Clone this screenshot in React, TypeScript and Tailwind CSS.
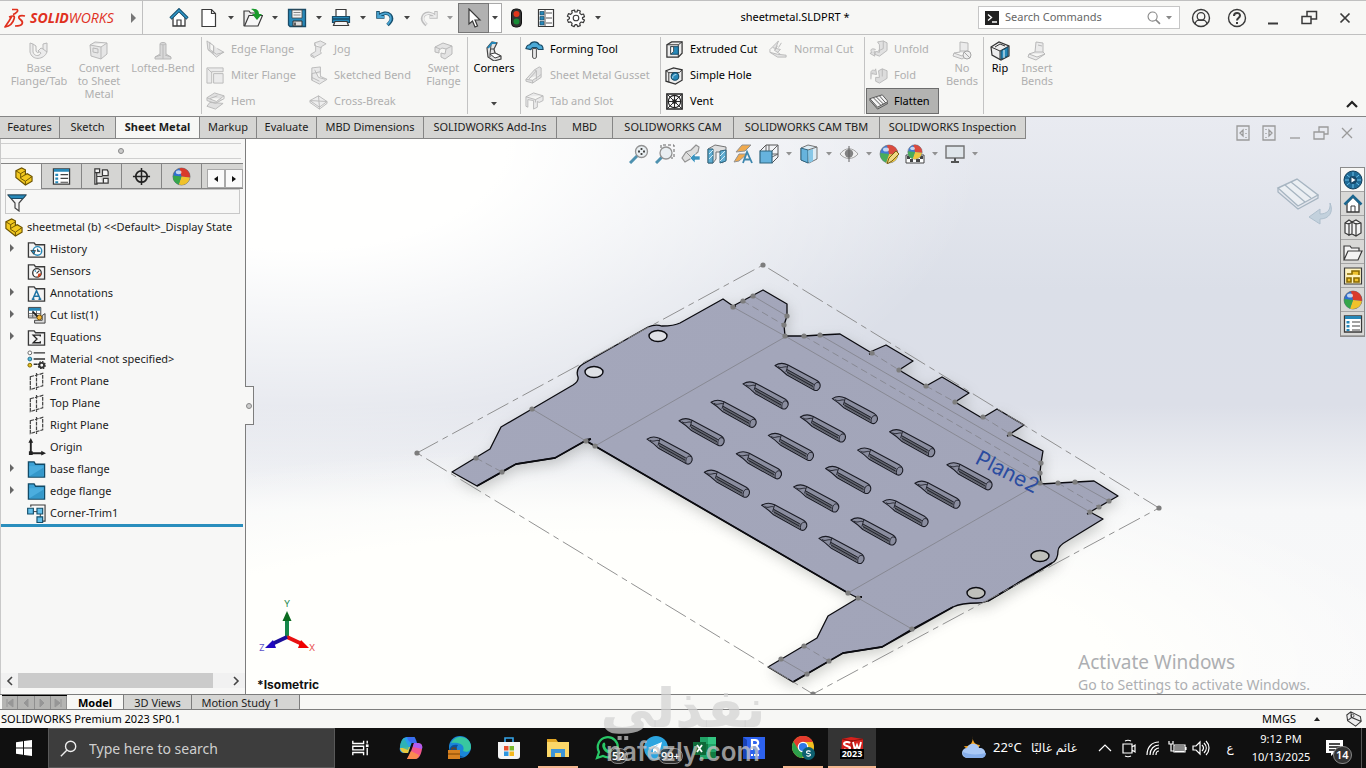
import type { ReactNode } from "react";

type P = { children?: ReactNode };

const G = "#b9b9b9";
const B = "#2788b8";
const K = "#3a3a3a";

function Ico({ children, box = 20, cls = "h-5 w-5" }: P & { box?: number; cls?: string }) {
  return (
    <svg viewBox={`0 0 ${box} ${box}`} className={`${cls} shrink-0`} fill="none" aria-hidden="true">
      {children}
    </svg>
  );
}

function Drop({ label, cls = "w-5", color = "#444" }: { label: string; cls?: string; color?: string }) {
  return (
    <button aria-label={label} className={`${cls} flex h-6 shrink-0 items-center justify-center`}>
      <svg viewBox="0 0 6 4" className="h-1 w-1.5" aria-hidden="true">
        <path d="M0 0h6L3 3.6z" fill={color} />
      </svg>
    </button>
  );
}

/* ---------- title bar icons ---------- */
const home = (
  <Ico>
    <path d="M4 9v9h12V9l-6-6z" fill="#fff" stroke={K} strokeWidth="1.3" />
    <path d="M1.5 10.5 10 2l8.500 8.500" stroke="#164f6e" strokeWidth="3.200" />
    <path d="M2 10 10 2.200l8 7.800" stroke="#2e97c9" strokeWidth="1.500" />
    <path d="M8 18v-6h4v6" stroke={K} strokeWidth="1.200" />
  </Ico>
);
const newDoc = (
  <Ico>
    <path d="M3 1.500h9.500l4 4v13H3z" fill="#fff" stroke={K} strokeWidth="1.200" />
    <path d="M12.500 1.500v4h4" stroke={K} strokeWidth="1.200" />
  </Ico>
);
const openDoc = (
  <Ico>
    <path d="M1 18V3h5l1.500 2H13v4" fill="#ececec" stroke={K} strokeWidth="1.200" />
    <path d="M1.500 18 6 7.500h13.500L15 18z" fill="#f7f7f7" stroke={K} strokeWidth="1.200" />
    <path d="M8 1c6-1 8 2 8 5h3l-5 6-5-6h3c0-2-1-3-4-5z" fill="#1a9a2c" />
  </Ico>
);
const save = (
  <Ico>
    <path d="M1.500 1.500h17v17H3l-1.500-1.500z" fill={B} stroke="#1a4c68" strokeWidth="1.300" />
    <path d="M5 2h10v8H5z" fill="#f3f3f3" stroke="#444" strokeWidth=".8" />
    <path d="M6.500 4.500h7M6.500 7h7" stroke="#888" />
    <path d="M6 13h9v5H6z" fill="#dcdcdc" stroke="#333" />
    <path d="M8 14.500v3" stroke="#333" strokeWidth="1.500" />
  </Ico>
);
const print = (
  <Ico>
    <path d="M5 9V1.500h10V9" fill="#fff" stroke={K} strokeWidth="1.200" />
    <path d="M1.500 8.500h17v6h-17z" fill={B} stroke="#1a4c68" strokeWidth="1.200" />
    <path d="M2 11h16" stroke="#164a66" strokeWidth="1.500" />
    <path d="M4 13.500h12l1.500 4h-15z" fill="#f4f4f4" stroke={K} strokeWidth="1.200" />
  </Ico>
);
const undo = (
  <Ico>
    <path d="M3 3v6h6.500M3.500 8.500C7 5 12 4 15 7c3 3.500 1 7-2.500 10" stroke="#17506f" strokeWidth="3.600" />
    <path d="M3 4v5h6M3.500 8.500C7 5 12 4.500 14.800 7.200c2.500 3.300.7 6.300-2.300 9.300" stroke="#4aa6d4" strokeWidth="1.800" />
  </Ico>
);
const redo = (
  <Ico>
    <path d="M17 3v6h-6.500M16.500 8.500C13 5 8 4 5 7c-3 3.500-1 7 2.500 10" stroke="#bdbdbd" strokeWidth="3.400" />
    <path d="M17 4v5h-6M16.500 8.500C13 5 8 4.500 5.200 7.200 2.700 10.500 4.500 13.500 7.500 16.500" stroke="#eee" strokeWidth="1.400" />
  </Ico>
);
const traffic = (
  <Ico>
    <rect x="5.500" y="1" width="10" height="18" rx="4" fill="#333" stroke="#111" />
    <circle cx="10.500" cy="6" r="3" fill="#e2371c" />
    <circle cx="10.500" cy="13.500" r="3" fill="#178c35" />
  </Ico>
);
const optionsList = (
  <Ico>
    <path d="M2.500 1.500h15v17h-15z" fill="#fff" stroke={K} strokeWidth="1.200" />
    <path d="M4 3.500h4v3.500H4zM4 8.500h4V12H4zM4 13.500h4V17H4z" fill={B} stroke="#1a4c68" strokeWidth=".7" />
    <path d="M10 5h6M10 10h6M10 15h6M9 2v16" stroke="#555" strokeWidth="1" />
  </Ico>
);
const gear = (
  <Ico>
    <path
      d="m8.500 2 .5 2 2 0 .6-2 2.700 1-.6 2.100 1.600 1.500 2.200-.6 1 2.600-2 1 0 1.400 2 1-1.100 2.600-2.200-.6-1.500 1.400.6 2.200-2.600 1-1-2h-1.500l-1.100 2-2.600-1.100.6-2.100-1.500-1.500-2.200.5-1-2.500 2-1.200v-1.400l-2-1L2.500 5.700l2.200.6 1.500-1.500L5.700 2.900z"
      fill="#fff"
      stroke={K}
      strokeWidth="1.200"
      strokeLinejoin="round"
    />
    <circle cx="10" cy="10" r="2.800" stroke={K} strokeWidth="1.100" />
  </Ico>
);

/* ---------- ribbon icons ---------- */
const ribbon: Record<string, ReactNode> = {
  base: <path d="M1 2l3 1v8c1 4 6 5 8 1l-3-2 3-3 2 1V3l4-1v9c-3 8-15 9-17 0zM4 3l3 2v5c1 2 2 2 3 1M14 8l4 3" stroke={G} fill="#ececec" />,
  convert: <path d="M1 4 6 1l12 1v11l-6 5-10-3zM1 4l11 2 6-4M12 6v12M4 7l5 1v4l-5-1z" stroke={G} fill="#e6e6e6" />,
  loft: <path d="M7 3c0-2 6-2 6 0v10l5 3v2H2v-2l5-3zM7 3c1 1 5 1 6 0M10 4v14M2 16l6-2M18 16l-6-2" stroke={G} fill="#d9d9d9" />,
  edge: <path d="M1 1l7 5v8l-6-4zM4 2v8l7 5 8-2-7-4M2 10l9 8 7-5M8 6v6" stroke={G} fill="#e6e6e6" />,
  miter: <path d="M1 2h17v4H6v12H1zM2 3l4 4M8 18V8h10v10z" stroke={G} fill="#ebebeb" />,
  hem: <path d="M1 6 9 1l10 3-8 6zM1 6v3l9 3 9-5M4 11l14 1-8 6-9-3zM19 4v3M4 7l8-3" stroke={G} fill="#e0e0e0" />,
  jog: <path d="M6 3l6-2 6 3-5 3-1 5 1 2-7 4-4-3 5-3V7zM6 3v3l7 2M2 15v2l4 2" stroke={G} fill="#e6e6e6" />,
  bend: <path d="M3 2l9-1v10l7 3-8 5-8-4zM3 15V8l9-2M6 4l4 8 7 2M3 12l8 4" stroke={G} fill="#e9e9e9" />,
  cross: <path d="M1 9l9-5 9 6-8 6zM1 9v2l10 7v-2M19 10v2l-8 6M1 9l18 1M10 4l1 12" stroke={G} fill="#eee" />,
  swept: <path d="M1 6 9 2l9 3v8l-7 5-4-2v-4l4 1 1-5-4-1-3 2v3L1 11zM1 6l5 2M18 5l-6 3" stroke={G} fill="#e3e3e3" />,
  corners: (
    <>
      <path d="M3 7 8 1l5 1-3 6 1 4 6 3v3l-7 2-6-4z" fill="#e4e4e4" stroke="#444" strokeWidth="1.200" />
      <path d="M7 8l3 0M6 13l5-1 6 3-6 2zM6 13v3M7 4l-1 9" stroke="#444" fill="#fff" />
      <path d="M4 7l4-5 4 0" stroke={B} strokeWidth="2" />
    </>
  ),
  forming: (
    <>
      <path d="M1 9c1-4 4-4 4-4 2-4 8-4 10 0 2 0 4 1 4 5h-5L12 8H8L6 10z" fill="#4ba9d6" stroke="#164a66" strokeWidth="1.300" />
      <path d="M8 9h4v9c0 2-4 2-4 0z" fill="#e8e8e8" stroke="#444" />
    </>
  ),
  gusset: <path d="M1 14l9-10 5-3 2 1v10l-9 6-7-2zM10 4l2 1v9M4 14l8-9M1 14l7 1 9-6M8 15v3" stroke={G} fill="#e2e2e2" />,
  slot: <path d="M1 5l8-4 10 3v5l-4 2-2-1v6l-4 2V9L3 8v8l-2-1zM1 5l10 3 8-4M11 8v3" stroke={G} fill="#eaeaea" />,
  extruded: (
    <>
      <path d="M2 5l5-3h11v12l-4 4H2z" fill="#ededed" stroke="#333" strokeWidth="1.300" />
      <path d="M2 5h12v13M14 5l4-3" stroke="#333" />
      <path d="M6 7h8v8H6z" fill={B} stroke="#164a66" />
      <path d="M6 15l3-3V7H6z" fill="#fff" stroke="#333" strokeWidth=".8" />
    </>
  ),
  hole: (
    <>
      <path d="M1 5l8-3 9 2v11l-7 4-10-3z" fill="#ededed" stroke="#333" strokeWidth="1.300" />
      <path d="M1 5l3 2h11l3-3M4 7v10" stroke="#333" />
      <circle cx="10.500" cy="11" r="4" fill={B} stroke="#164a66" strokeWidth="1.200" />
      <path d="M8 13c0-3 2-4 4-4" stroke="#bfe2f3" />
    </>
  ),
  vent: (
    <>
      <path d="M2 2h16v16H2z" fill="#f6f6f6" stroke="#222" strokeWidth="1.600" />
      <circle cx="10" cy="10" r="6.500" stroke="#222" strokeWidth="1.200" />
      <circle cx="10" cy="10" r="2.500" fill="#222" />
      <path d="M3 3l14 14M17 3 3 17M10 3v14M3 10h14" stroke="#222" />
    </>
  ),
  normal: <path d="M1 10 10 1 6 11l3-5M1 10v3l8 2 9 1v2H9l-8-5M10 8l3-5M6 11l6 4M4 8l8 2-3 3" stroke={G} fill="#e4e4e4" />,
  unfold: <path d="M9 2l6-1 4 2v8l-8 6-5-2 1-3 4 1V5zM15 1v8l-6 3M7 10c-5-2-6 1-4 3l-2 1 5 3v-5l-1 1" stroke={G} fill="#e1e1e1" />,
  fold: <path d="M10 5l4-2 5 2v8l-8 5-4-2v-4h4zM14 3v8M2 14V7c0-3 3-3 4-2l1-2 1 6-5-1 1-1" stroke={G} fill="#dcdcdc" />,
  flatten: (
    <>
      <path d="M1 7 14 3l6 7-11 6z" fill="#f4f4f4" stroke="#555" />
      <path d="M1 7v2l8 9 11-6v-2M4.500 6l8 8M7.500 5l8 8M11 4l7 8" stroke="#555" />
    </>
  ),
  nobends: (
    <>
      <path d="M8 1l8 1v8l2 3-8 5-9-3 1-3 6-1zM8 10l8 0M2 12l8 3 8-3" stroke={G} fill="#ebebeb" />
      <circle cx="15" cy="14" r="4" stroke="#a6a6a6" fill="#eee" />
      <path d="M12 11l6 6" stroke="#a6a6a6" />
    </>
  ),
  rip: (
    <>
      <path d="M1 6l8-5 10 4v10l-8 4-9-5z" fill="#ededed" stroke="#333" strokeWidth="1.200" />
      <path d="M1 6l9 4 9-5M10 10v9M5 6l5-3 5 2" stroke="#333" />
      <path d="M11 10l7-4v9l-7 3z" fill={B} stroke="#164a66" />
      <path d="M14 9v8" stroke="#fff" />
    </>
  ),
  insert: <path d="M9 1l7 1v9l2 2-9 6-8-3 1-3 6-2zM8 11l8 0M2 13l8 3 8-3M11 4l4 1" stroke={G} fill="#ebebeb" />,
};

function Big({ icon, lines, cls, on }: { icon: string; lines: string[]; cls: string; on?: boolean }) {
  return (
    <button className={`${cls} flex shrink-0 flex-col items-center pt-1.5 ${on ? "text-black" : "text-[#b0b0b0]"}`}>
      <Ico>{ribbon[icon]}</Ico>
      {lines.map((l) => (
        <span key={l} className="leading-[13px] whitespace-nowrap">
          {l}
        </span>
      ))}
    </button>
  );
}

function Small({ icon, text, on, active }: { icon: string; text: string; on?: boolean; active?: boolean }) {
  return (
    <button
      className={`flex h-[26px] items-center gap-1.5 border pr-2 pl-0.5 text-left whitespace-nowrap ${
        active ? "border-[#6d6d6d] bg-[#b3b3b1] text-black" : on ? "border-transparent text-black" : "border-transparent text-[#b0b0b0]"
      }`}
    >
      <Ico cls="h-[19px] w-[19px]">{ribbon[icon]}</Ico>
      {text}
    </button>
  );
}

const Sep = () => <span className="my-0.5 w-px shrink-0 self-stretch bg-[#c3c3c3]" />;
const Col = ({ children, cls }: P & { cls: string }) => <div className={`${cls} flex shrink-0 flex-col items-start`}>{children}</div>;

const ribbonTabs: [string, string][] = [
  ["Features", "w-[60px]"],
  ["Sketch", "w-[56px]"],
  ["Sheet Metal", "w-[84px]"],
  ["Markup", "w-[57px]"],
  ["Evaluate", "w-[60px]"],
  ["MBD Dimensions", "w-[107px]"],
  ["SOLIDWORKS Add-Ins", "w-[133px]"],
  ["MBD", "w-[56px]"],
  ["SOLIDWORKS CAM", "w-[121px]"],
  ["SOLIDWORKS CAM TBM", "w-[146px]"],
  ["SOLIDWORKS Inspection", "w-[146px]"],
];

/* ---------- feature tree icons ---------- */
const folderShape = <path d="M1.500 18V3h6l1.500 2h9.500v13z" fill="#f4f4f4" stroke={K} strokeWidth="1.400" />;
const partIcon = (
  <>
    <path d="M2 4l6-3 4 2v5l2-1 5 3v5l-7 4L2 11z" fill="#f2c81f" stroke="#6b5200" strokeWidth="1.200" />
    <path d="M2 4l5 3 5-3M7 7v5l5 3 7-5M12 15v4M7 11l5-3" stroke="#6b5200" />
  </>
);
const planeIcon = <path d="M3.500 5l13-3.500v13l-13 4zM10 1v18" stroke="#444" strokeWidth="1.300" strokeDasharray="4 1" />;
const blueFolder = (
  <>
    <path d="M1.500 18V2h6l1.500 2.500h9.500V18z" fill="#3da2d6" stroke="#124a66" strokeWidth="1.400" />
    <path d="M2.500 6.500h15V17h-15z" fill="#4badde" />
    <path d="M2.500 17 17.500 8v9z" fill="#3598ca" />
  </>
);
const tree: { text: string; arrow?: boolean; icon: ReactNode }[] = [
  {
    text: "History",
    arrow: true,
    icon: (
      <>
        {folderShape}
        <circle cx="11" cy="11.500" r="4.500" stroke={B} strokeWidth="1.500" fill="#fff" />
        <path d="M11 9v3h3M4 11l3 4 2-4z" stroke="#333" fill={B} strokeWidth=".8" />
      </>
    ),
  },
  {
    text: "Sensors",
    icon: (
      <>
        {folderShape}
        <circle cx="10.500" cy="11.500" r="4.500" stroke="#333" strokeWidth="1.400" fill="#fff" />
        <path d="M10 12l3-3" stroke="#333" strokeWidth="1.200" />
        <path d="M12 12h3c0 2-2 4-4 4z" fill="#d8441e" />
        <path d="M8 9l1.500 1" stroke={B} strokeWidth="1.400" />
      </>
    ),
  },
  {
    text: "Annotations",
    arrow: true,
    icon: (
      <>
        {folderShape}
        <path d="M6 16l4-9 4 9M7.500 13h5M5 16h3M12 16h3" stroke="#1e73a4" strokeWidth="1.600" />
      </>
    ),
  },
  {
    text: "Cut list(1)",
    arrow: true,
    icon: (
      <>
        <path d="M1.500 1.500h13v11h-13z" fill="#fff" stroke={K} />
        <path d="M2 2h12v3H2z" fill={B} />
        <path d="M2 8h12M2 10.500h12M6 5v7M10 5v7" stroke="#555" strokeWidth=".9" />
        <path d="M8 18h11V8l-3 2v5H8z" fill="#ddd" stroke={K} />
        <circle cx="13" cy="12" r="2.500" fill="#f4b63a" stroke="#7a5300" />
        <path d="M6 6l5 5" stroke="#222" strokeWidth="1.800" />
      </>
    ),
  },
  {
    text: "Equations",
    arrow: true,
    icon: (
      <>
        {folderShape}
        <path d="M14 9V7.500H6.500l4 4-4 4H14V14" stroke="#222" strokeWidth="1.400" />
      </>
    ),
  },
  {
    text: "Material <not specified>",
    icon: (
      <>
        <circle cx="3" cy="3" r="2" stroke="#666" fill="#fff" />
        <circle cx="3" cy="9.500" r="2" stroke="#1b6a8f" fill="#58bcd6" />
        <circle cx="3" cy="16" r="2" stroke="#7d6500" fill="#e6bf20" />
        <path d="M7 3h12M7 9.500h12M7 15h4" stroke="#333" strokeWidth="1.500" />
        <circle cx="15.500" cy="16" r="2.500" stroke="#333" strokeWidth="2" />
        <circle cx="15.500" cy="16" r="3.600" stroke="#333" strokeWidth="1.500" strokeDasharray="1.600 1.200" />
      </>
    ),
  },
  { text: "Front Plane", icon: planeIcon },
  { text: "Top Plane", icon: planeIcon },
  { text: "Right Plane", icon: planeIcon },
  {
    text: "Origin",
    icon: (
      <>
        <path d="M4 4v12h12" stroke="#222" strokeWidth="2" />
        <path d="M1.500 5 4 0l2.500 5zM15 13.500l5 2.500-5 2.500zM2 14h4v4H2z" fill="#222" />
      </>
    ),
  },
  { text: "base flange", arrow: true, icon: blueFolder },
  { text: "edge flange", arrow: true, icon: blueFolder },
  {
    text: "Corner-Trim1",
    icon: (
      <>
        <path d="M4 3V1h15v17h-6" stroke={K} strokeWidth="1.200" fill="#f8f8f8" />
        <path d="M4 8h10v6" stroke={K} />
        <path d="M.7 4.500h6v6h-6zM10.500 4.500h6v6h-6zM10.500 13.500h6v6h-6z" fill="#64bfea" stroke="#134d69" strokeWidth="1.200" />
      </>
    ),
  },
];

const ball = (
  <>
    <circle cx="10" cy="10" r="9" fill="#2f6fd0" stroke="#555" strokeWidth=".6" />
    <path d="M10 10 8 1.200A9 9 0 0 1 18.800 11z" fill="#d93a2b" />
    <path d="M10 10l8.800 1A9 9 0 0 1 7 18.500z" fill="#f0c22b" />
    <path d="M10 10 7 18.500A9 9 0 0 1 1.200 9z" fill="#37a64a" />
    <ellipse cx="7" cy="5.500" rx="3" ry="2" fill="#fff" opacity=".7" />
  </>
);

const panelTabs: { label: string; icon: ReactNode }[] = [
  { label: "FeatureManager design tree", icon: partIcon },
  {
    label: "PropertyManager",
    icon: (
      <>
        <path d="M1.500 2h17v16h-17z" fill="#fff" stroke={K} strokeWidth="1.300" />
        <path d="M2 2h16v3H2z" fill={B} />
        <path d="M3.500 7h3v2.500h-3zM3.500 11h3v2.500h-3zM3.500 15h3v2h-3z" fill={B} />
        <path d="M9 8h8M9 12h8M9 16h8" stroke="#444" strokeWidth="1.200" />
      </>
    ),
  },
  {
    label: "ConfigurationManager",
    icon: <path d="M3 2h5v4H3zM5 6v11h7M5 10h6M3 2v16h3M11 3h5l1 2v4h-6zM12 12h5v5h-5z" stroke={K} strokeWidth="1.300" fill="#f4f4f4" />,
  },
  { label: "DimXpertManager", icon: <><circle cx="10" cy="10" r="6" stroke="#222" strokeWidth="1.800" /><path d="M10 1v18M1 10h18" stroke="#222" strokeWidth="1.600" /></> },
  { label: "DisplayManager", icon: ball },
];

/* ---------- heads-up view toolbar ---------- */
const lens = (x: number, y: number) => (
  <>
    <path d={`M1 19l${x - 5} ${-(20 - y - 5)}`} stroke="#3c86a8" strokeWidth="3" />
    <circle cx={x} cy={y} r="6" fill="#e8eef2" stroke="#888" strokeWidth="1.300" />
  </>
);
const hud: { label: string; icon: ReactNode; drop?: boolean }[] = [
  { label: "Zoom to Fit", icon: <>{lens(12.5, 7.5)}<path d="M12.500 4v2M12.500 9v2M9 7.500h2M14 7.500h2" stroke="#333" strokeWidth="1.800" /></> },
  { label: "Zoom to Area", icon: <>{lens(11, 9)}<path d="M6 4V1h13v13h-3" stroke="#555" strokeDasharray="3 2" /></> },
  { label: "Previous View", icon: <><path d="M1 14l4-6 5-2 5-5 3 2-1 5-8 7-5 3z" fill="#dcdcdc" stroke="#888" strokeWidth="1.200" /><path d="M5 8l5 5" stroke="#888" /><path d="M19 12v4h-5v3l-5-5 5-5v3z" fill={B} stroke="#fff" strokeWidth=".6" /></> },
  { label: "Section View", icon: <><path d="M1 5l7-4 11 2v13l-4 3V8H9v7l-3 4H1z" fill="#ddd" stroke="#666" /><path d="M1 5h5v14H1zM13 7l6-1v11l-6 2z" fill="#4fa6cf" stroke="#1b5673" /><path d="M2 10l4-4M2 15l4-4M13 12l5-5M13 17l5-5" stroke="#cfeaf7" /></> },
  { label: "Dynamic Annotation Views", icon: <><path d="M3 8l6-7h9l-6 6zM1 18 6 10h8L6 17z" fill="#f0a23c" stroke="#888" /><path d="M10 19l4-11 5 11M11.500 15.500h6" stroke="#2a7ba6" strokeWidth="1.800" /></> },
  { label: "View Orientation", drop: true, icon: <><path d="M1 7l6-6h12v12l-6 6" stroke="#444" /><path d="M7 1v6M13 7l6-6M13 10h6M13 13l6-3M10 1v6" stroke="#555" /><path d="M1 7h12v12H1z" fill="#58addb" stroke="#1b5673" strokeWidth="1.200" /></> },
  { label: "Display Style", drop: true, icon: <><path d="M2 4l7-3 9 2v12l-8 4-8-3z" fill="#dcecf5" stroke="#666" /><path d="M2 4l7 2v13l-7-3z" fill="#58addb" stroke="#1b5673" /><path d="M9 6l5-1v12l-4 2z" fill="#7cc3e6" /><path d="M9 6l9-3" stroke="#666" /></> },
  { label: "Hide/Show Items", drop: true, icon: <><path d="M1 10c5-7 13-7 18 0-5 6-13 6-18 0z" fill="#f1f1f1" stroke="#999" /><circle cx="10" cy="9.500" r="4.200" fill="#777" /><path d="M10 2v16" stroke="#555" /></> },
  { label: "Edit Appearance", icon: <>{ball}<path d="M8 20l2-6 7-7 3 3-7 7z" fill="#f1d678" stroke="#6d5400" /></> },
  { label: "Apply Scene", drop: true, icon: <><path d="M1 11h18v8H1z" fill="#fff" stroke="#333" /><path d="M2 12h3v3H2zM5 15h3v3H5zM11 15h4v3h-4zM15 12h3v3h-3z" fill="#333" /><svg x="2" y="0" width="16" height="16" viewBox="0 0 20 20">{ball}</svg></> },
  { label: "View Settings", drop: true, icon: <><path d="M1 2h18v12H1z" fill="#dfe5ea" stroke="#666" strokeWidth="1.400" /><path d="M10 14v3M6 18h8" stroke="#444" strokeWidth="2" /></> },
];

const pane: { label: string; icon: ReactNode }[] = [
  { label: "3DEXPERIENCE Marketplace", icon: <><circle cx="10" cy="10" r="9" fill="#1f6b97" stroke="#123f5b" /><path d="M10 2v16M2 10h16M4 5l12 10M16 5 4 15" stroke="#6cc2ea" /><circle cx="10" cy="10" r="4" fill="#17496a" /><path d="M8.500 7.500v5l4-2.500z" fill="#fff" /></> },
  { label: "SOLIDWORKS Resources", icon: <><path d="M4 9v9h12V9l-6-6z" fill="#fff" stroke={K} strokeWidth="1.300" /><path d="M1.500 10.500 10 2l8.500 8.500" stroke="#1c678f" strokeWidth="2.600" /><path d="M8 18v-6h4v6" stroke={K} /></> },
  { label: "Design Library", icon: <path d="M2 5l4-3 3 2 4-2 5 3v10l-5 3-4-2-3 1-4-2zM6 5v13M9 4v12M13 5v13M2 5l4 1 3-2 4 2 5-1" stroke={K} fill="#f3f3f3" strokeWidth="1.200" /> },
  { label: "File Explorer", icon: <path d="M1 18V4h6l1.500 2H16v3M1 18 5 9h14l-4 9z" stroke={K} fill="#f3f3f3" strokeWidth="1.200" /> },
  { label: "View Palette", icon: <><path d="M1.500 2h17v16h-17z" fill="#fff3bf" stroke={K} strokeWidth="1.200" /><path d="M4 8h5V5h7v4M4 12h4v4H4zM11 12h5v4h-5z" stroke="#8a6a00" strokeWidth="1.600" fill="#f0c22b" /></> },
  { label: "Appearances", icon: ball },
  { label: "Custom Properties", icon: panelTabs[1].icon },
];

/* ---------- model drawing ---------- */
const sheetOutline =
  "M452 472 490 449 501 427 532 409 573 385Q579 381 578 377 575 369 583 364L648 327Q655 324 662 326 674 326 680 323L723 299 733 306 763 290 787 304 787 316 784 325 785 336 804 336 820 335 840 334 870 352 886 345 913 361 899 370 926 386 942 377 969 393 955 402 982 418 997 409 1024 425 1010 434 1043 451 1041 463 1040 473 1041 484 1058 483 1094 481 1118 496 1090 512 1103 519 1067 541Q1058 546 1058 551 1058 560 1052 563L988 601Q983 603 978 603 961 603 953 607L912 629 882 647 843 653 793 682 768 667 817 638 828 616 858 598 848 593 595 446 588 442 590 439 585 441 555 458 516 464 477 486Z";
const louvers = [0, 1, 2, 3, 4].flatMap((i) => [0, 1, 2, 3].map((j) => ({ x: 775 - 32 * i + 57.3 * j, y: 364 + 18.4 * i + 33.1 * j })));
const nodes = [
  [417, 453], [763, 265], [1159, 508], [813, 694], [733, 307], [743, 301], [753, 296], [787, 316], [784, 325], [785, 336], [804, 336], [820, 335],
  [872, 353], [899, 370], [926, 386], [955, 402], [983, 417], [1010, 434], [1041, 463], [1040, 473], [1040, 483], [1058, 483], [1075, 482], [1109, 501],
  [1099, 507], [1090, 512], [532, 409], [586, 441], [595, 446], [476, 458], [502, 472], [848, 593], [858, 598], [912, 629], [804, 646], [829, 661], [781, 659], [807, 674],
];
const holes = [[658, 336], [594, 372], [1040, 556], [976, 593]];

function Model() {
  return (
    <svg viewBox="246 139 1120 555" className="absolute inset-0 h-full w-full" role="img" aria-label="Flattened sheet metal part, isometric view">
      <defs>
        <linearGradient id="sheet" x1="0" y1="0" x2="1" y2="1">
          <stop offset="0" stopColor="#a4a7bb" />
          <stop offset="1" stopColor="#a1a4b8" />
        </linearGradient>
        <filter id="soft" x="-10%" y="-10%" width="120%" height="120%">
          <feGaussianBlur stdDeviation="7" />
        </filter>
        <g id="louver" stroke="#1a1b24" strokeWidth="1.100" strokeLinejoin="round">
          <path d="M0 1.500C4-1 9-1 13 1L42 16.500Q46 19 45 23 43 28 39 26L12 11C9 8 4 4 0 1.500Z" fill="#8a8d9f" />
          <path d="M12 5 38 19.500 38 25 12 10Z" fill="#62656f" stroke="none" />
          <path d="M13 1 11 8M12 5.500 39 20.500M39 25.500C38 21 41 17 44 19M3 2.500C6 5 9 2 12 3M12 8 38 22.500" fill="none" strokeWidth=".9" />
        </g>
      </defs>
      <path d={sheetOutline} fill="#6d6f6c" opacity=".35" filter="url(#soft)" transform="translate(2 5)" />
      <path d={sheetOutline} fill="url(#sheet)" stroke="#0b0b10" strokeWidth="1.300" strokeLinejoin="round" />
      <path d="M477 486 516 464 555 458 585 441M588 442 848 593M793 682 843 653 882 647 953 607M988 601 1052 563" fill="none" stroke="#0b0b10" strokeWidth="1.800" />
      <path d="M586 440 591 439M855 597 862 597M869 354 874 353M1007 436 1012 434M1087 514 1092 512M731 307 736 306" stroke="#0b0b10" strokeWidth="1.800" />
      {holes.map(([x, y]) => (
        <ellipse key={x} cx={x} cy={y} rx="9" ry="5.500" fill={y > 500 ? "#bfc0bb" : "#dfe1e6"} stroke="#0b0b10" strokeWidth="1.400" />
      ))}
      <g stroke="#85868f" strokeWidth=".9" fill="none">
        <path d="M733 307 785 336M753 296 787 316M785 337 595 446M532 409 586 441M785 336 1040 484M820 335 1041 463M1040 483 848 593M858 598 912 629M1040 483 1090 512M1075 482 1109 501M781 659 807 674" />
        <path d="M743 301 784 325M804 336 1040 473M476 458 502 472M872 353 899 370M926 386 955 402M983 417 1010 434M1058 483 1099 507M804 646 829 661" strokeDasharray="7 4" />
        <path d="M417 453 763 265 1159 508 813 694Z" stroke="#868686" strokeDasharray="24 5 6 5" />
      </g>
      {louvers.map((l) => (
        <use key={`${l.x}-${l.y}`} href="#louver" x={l.x} y={l.y} />
      ))}
      {nodes.map(([x, y]) => (
        <circle key={`${x}-${y}`} cx={x} cy={y} r="2.600" fill="#7d7d7d" />
      ))}
      <text x="974" y="463" transform="rotate(27 974 463)" fill="#2b4ca0" className="font-['Inter',sans-serif] text-[21px]">
        Plane2
      </text>
      <g>
        <path d="M287 637V620" stroke="#15874a" strokeWidth="4" />
        <path d="M282.500 621 287 611l4.500 10z" fill="#0b6b20" />
        <path d="M287 637 302 644" stroke="#e81010" strokeWidth="4" />
        <path d="m301 640 8 8-11 0z" fill="#f00000" />
        <path d="M287 637 272 644" stroke="#1c0f9a" strokeWidth="4" />
        <path d="m273 640-8 8 11 0z" fill="#2008c0" />
        <g className="font-['Inter',sans-serif] text-[9px]">
          <text x="284" y="607" fill="#1d8a4c">Y</text>
          <text x="309" y="651" fill="#e85050">X</text>
          <text x="259" y="651" fill="#5a50c8">Z</text>
        </g>
      </g>
      <text x="257" y="689" fill="#111" className="font-['Inter',sans-serif] text-[12px] font-bold">
        *Isometric
      </text>
      <g opacity=".75">
        <path d="M1278 188 1297 179 1318 195 1298 206Z" fill="#eef2f5" stroke="#93a5b3" strokeWidth="1.400" />
        <path d="M1278 188v4l20 17 20-11v-3M1285 185l20 17M1291 182l20 16" fill="none" stroke="#93a5b3" strokeWidth="1.300" />
        <path d="M1330 203c1 8-4 11-10 11v-5l-11 8 11 7v-5c9 0 14-7 10-16z" fill="#b9cbd9" stroke="#9db2c2" />
      </g>
    </svg>
  );
}

/* ---------- taskbar ---------- */
const apps: { label: string; icon: ReactNode; badge?: string; open?: boolean; active?: boolean }[] = [
  { label: "Copilot", icon: <><path d="M8 1h8l-3 5-4 11H6c-4 0-6-2-5-6 1-6 3-10 7-10z" fill="#2a9df0" /><path d="M1 12c1 4 3 5 6 5h2l2-6z" fill="#e6c83c" /><path d="M1 11c0-4 2-8 4-9l5 9-1 3z" fill="#30b8a8" opacity=".8" /><path d="M8 1h6c2 0 3 2 4 6h-6L9 4z" fill="#3a6df0" /><path d="M16 23H8l3-5 4-11h3c4 0 6 2 5 6-1 6-3 10-7 10z" fill="#f0568c" /><path d="M15 7h3c4 0 6 2 5 6l-9-2z" fill="#b05cf0" /><path d="M8 23l4-8 8 4c-1 3-2 4-4 4z" fill="#fa8a50" /></> },
  { label: "Microsoft Edge", icon: <><circle cx="12" cy="11" r="11" fill="#1a86d8" /><path d="M3 7C8-3 23 0 23 11c0 4-4 6-8 4 3-7-6-9-12-8z" fill="#38c7a0" /><path d="M10 9c-3 4-1 11 6 12-8 3-15-3-14-9 1-3 5-4 8-3z" fill="#0c4f9a" /><path d="M0 14h12v9H0z" fill="#d98220" /><path d="M4 14v-2h4v2M0 18h12" stroke="#7c4300" /></> },
  { label: "Microsoft Store", icon: <><path d="M8 6V2h8v4" stroke="#35a4e8" strokeWidth="1.600" /><path d="M1 6h22v14c0 2-1 3-3 3H4c-2 0-3-1-3-3z" fill="#f4f4f4" /><path d="M7 10h4.500v4.500H7z" fill="#e8502c" /><path d="M12.500 10H17v4.500h-4.500z" fill="#78b82a" /><path d="M7 15.500h4.500V20H7z" fill="#2d96e0" /><path d="M12.500 15.500H17V20h-4.500z" fill="#f6b81c" /></> },
  { label: "File Explorer", open: true, icon: <><path d="M1 3h9l2 3h11v15H1z" fill="#e0a524" /><path d="M1 6h22v15H1z" fill="#fbd768" /><path d="M5 21v-8h14v8h-4v-4H9v4z" fill="#3d95d6" /></> },
  { label: "WhatsApp", badge: "52", icon: <><path d="M2 22l2-6a10 10 0 1 1 4 4z" stroke="#28c766" strokeWidth="2.200" /><path d="M8 7c2-2 3 2 2 3 1 3 3 4 4 4 2-2 5 1 2 3-5 2-11-6-8-10z" fill="#28c766" /></> },
  { label: "Telegram", badge: "99+", icon: <><circle cx="12" cy="12" r="12" fill="#2ca5e0" /><path d="M4 12l14-6-3 12-4-3-2 2v-4l6-5-8 5z" fill="#fff" /></> },
  { label: "Excel", icon: <><path d="M7 1h16v22H7z" fill="#21a366" /><path d="M15 1h8v7h-8z" fill="#33c481" /><path d="M7 8h8v8H7zM15 16h8v7h-8z" fill="#107c41" /><path d="M0 6h13v13H0z" fill="#0e6a38" /><path d="M4 9l5 7M9 9l-5 7" stroke="#fff" strokeWidth="1.800" /></> },
  { label: "Revit", icon: <><path d="M1 1h22v22H1z" fill="#2d62ee" /><path d="M1 1l4 3v19H1z" fill="#1a43b8" /><path d="M10 14V4h3c4 0 4 5 1 5h-4m4 0 3 5" stroke="#fff" strokeWidth="2.200" /><path d="M9 19h8" stroke="#fff" strokeWidth="2" strokeDasharray="2 1" /></> },
  { label: "Google Chrome", open: true, icon: <><circle cx="12" cy="11" r="11" fill="#f3bf20" /><path d="M2.500 5.500A11 11 0 0 1 22 6H12l-5 8z" fill="#e33b2e" /><path d="M2.500 5.500A11 11 0 0 0 11 22l4-8-8-1z" fill="#2c9f4b" /><circle cx="12" cy="11" r="5.300" fill="#fff" /><circle cx="12" cy="11" r="4.100" fill="#2f78e8" /><circle cx="17.500" cy="17.500" r="6.500" fill="#0d6070" /><path d="M19.500 15.500c-1-1-4-1-4 .7 0 1.800 4 .8 4 2.600 0 1.600-3 1.700-4 .6" stroke="#fff" strokeWidth="1.200" /></> },
  { label: "SOLIDWORKS 2023", open: true, active: true, icon: <><path d="M2 3l9-2 12 2v17l-11 3L1 21z" fill="#d6211c" /><path d="M12 4v9M2 3l10 2 11-2" stroke="#8d0f0c" /><path d="M10 7c-2-2-6-1-6 1s6 2 6 4-4 3-6 1" stroke="#fff" strokeWidth="2" /><path d="M13 6l2 8 2-5 2 5 2-8" stroke="#fff" strokeWidth="1.800" /></> },
];

export default function App() {
  return (
    <div className="relative flex h-screen min-h-[600px] flex-col overflow-hidden bg-[#f7f7f5] font-['Noto_Sans',sans-serif] text-[11px] text-[#1c1c1c]">
      <header className="flex h-[35px] shrink-0 items-center border-t border-b border-[#c0c0c0]">
        <div className="flex h-full w-[143px] shrink-0 items-center border-r border-[#c0c0c0] pl-1">
          <svg viewBox="0 0 22 20" className="h-5 w-[22px]" fill="none" stroke="#e0301e" strokeWidth="1.700" strokeLinejoin="round" aria-hidden="true">
            <path d="M8 1.500h5c2 1-1 4-4 5M5 9c5-2 6-1 5 2-1 4-4 7-9 8l4-6 3-5" />
            <path d="M21 8c-4-1-7 0-6 2s5 3 3 6c-1 2-4 2-7 2" />
          </svg>
          <span className="ml-1 font-['Open_Sans',sans-serif] text-[14px] text-[#e0301e] italic">
            <b>SOLID</b>WORKS
          </span>
          <button aria-label="Show menu" className="mr-1.5 ml-auto">
            <svg viewBox="0 0 5 10" className="h-2.5 w-[5px]" aria-hidden="true">
              <path d="M0 0l5 5-5 5z" fill="#777" />
            </svg>
          </button>
        </div>
        <nav className="flex items-center pl-6" aria-label="Quick access">
          <button aria-label="Home" className="mr-1.5 flex w-6 justify-center">{home}</button>
          <button aria-label="New" className="flex w-6 justify-center">{newDoc}</button>
          <Drop label="New options" />
          <button aria-label="Open" className="flex w-6 justify-center">{openDoc}</button>
          <Drop label="Open options" />
          <button aria-label="Save" className="flex w-6 justify-center">{save}</button>
          <Drop label="Save options" />
          <button aria-label="Print" className="flex w-6 justify-center">{print}</button>
          <Drop label="Print options" />
          <button aria-label="Undo" className="flex w-6 justify-center">{undo}</button>
          <Drop label="Undo options" />
          <button aria-label="Redo" className="flex w-6 justify-center">{redo}</button>
          <Drop label="Redo options" color="#999" cls="w-[17px]" />
          <button aria-label="Select" className="flex h-[30px] w-[31px] items-center justify-center border border-[#777] bg-[#b1b1b1]">
            <Ico>
              <path d="M5 1v15l3.500-3 2.500 6 2.500-1-2.500-6H16z" fill="#fff" stroke={K} strokeWidth="1.200" />
            </Ico>
          </button>
          <span className="flex h-[30px] items-center border border-l-0 border-[#aaa] bg-white">
            <Drop label="Select options" cls="w-3" />
          </span>
          <button aria-label="Rebuild" className="ml-0.5 flex w-6 justify-center">{traffic}</button>
          <button aria-label="File properties" className="ml-1.5 flex w-6 justify-center">{optionsList}</button>
          <button aria-label="Options" className="ml-1.5 flex w-6 justify-center">{gear}</button>
          <Drop label="Options menu" />
        </nav>
        <h1 className="flex-1 pl-1 text-center text-black">sheetmetal.SLDPRT *</h1>
        <label className="flex h-[23px] w-[202px] shrink-0 items-center border border-[#c6c6c6] bg-white px-1.5">
          <svg viewBox="0 0 14 14" className="h-3.5 w-3.5 shrink-0" fill="none" aria-hidden="true">
            <path d="M0 0h14v14H0z" fill="#222" />
            <path d="M3 3.500 6.500 6.500 3 9.500M7 11h5" stroke="#fff" strokeWidth="1.400" />
          </svg>
          <input aria-label="Search Commands" placeholder="Search Commands" className="ml-1.5 w-0 flex-1 bg-transparent outline-none placeholder:text-[#666]" />
          <Ico cls="h-3.5 w-3.5">
            <circle cx="8" cy="8" r="6.500" stroke="#888" strokeWidth="1.600" />
            <path d="M12.500 12.500l6 6" stroke="#888" strokeWidth="2.400" />
          </Ico>
          <span className="-mr-1">
            <Drop label="Search scope" cls="w-4" color="#888" />
          </span>
        </label>
        <div className="flex shrink-0 items-center pl-[3px]">
          <button aria-label="Account" className="flex w-9 justify-center">
            <Ico>
              <circle cx="10" cy="10" r="8.500" stroke={K} strokeWidth="1.400" />
              <circle cx="10" cy="8.500" r="3.800" stroke={K} strokeWidth="1.300" />
              <path d="M4 16c1-4 3-4 6-4s5 0 6 4" stroke={K} strokeWidth="1.300" />
            </Ico>
          </button>
          <button aria-label="Help" className="flex w-9 justify-center">
            <Ico>
              <circle cx="10" cy="10" r="8.500" stroke={K} strokeWidth="1.400" />
              <path d="M7 8c0-4 6-4 6-.5 0 2.500-3 2.500-3 5M10 14v2" stroke={K} strokeWidth="2" />
            </Ico>
          </button>
          <button aria-label="Minimize" className="flex w-9 justify-center">
            <Ico><path d="M5 15.500h10" stroke={K} strokeWidth="2" /></Ico>
          </button>
          <button aria-label="Restore" className="flex w-9 justify-center">
            <Ico><path d="M3 8.500h9v7H3zM8 8V3.500h9.500V11H12" stroke={K} strokeWidth="1.500" /></Ico>
          </button>
          <button aria-label="Close" className="flex w-9 justify-center">
            <Ico><path d="M5.500 5.500l9 9M14.500 5.500l-9 9" stroke={K} strokeWidth="1.700" /></Ico>
          </button>
          <span className="w-[3px]" />
        </div>
      </header>

      <section aria-label="Sheet Metal commands" className="flex h-[82px] shrink-0 border-b border-[#858585] pl-[9px]">
        <Big icon="base" lines={["Base", "Flange/Tab"]} cls="w-[60px]" />
        <Big icon="convert" lines={["Convert", "to Sheet", "Metal"]} cls="w-[60px]" />
        <Big icon="loft" lines={["Lofted-Bend"]} cls="w-[68px]" />
        <span className="w-1 shrink-0" />
        <Sep />
        <Col cls="w-[104px] pl-px pt-px">
          <Small icon="edge" text="Edge Flange" />
          <Small icon="miter" text="Miter Flange" />
          <Small icon="hem" text="Hem" />
        </Col>
        <Col cls="w-[114px] pt-px">
          <Small icon="jog" text="Jog" />
          <Small icon="bend" text="Sketched Bend" />
          <Small icon="cross" text="Cross-Break" />
        </Col>
        <Big icon="swept" lines={["Swept", "Flange"]} cls="w-[47px]" />
        <Sep />
        <div className="flex w-[52px] shrink-0 flex-col items-center justify-between">
          <Big icon="corners" lines={["Corners"]} cls="w-full" on />
          <Drop label="Corners options" />
        </div>
        <Sep />
        <Col cls="w-[139px] pl-px pt-px">
          <Small icon="forming" text="Forming Tool" on />
          <Small icon="gusset" text="Sheet Metal Gusset" />
          <Small icon="slot" text="Tab and Slot" />
        </Col>
        <Sep />
        <Col cls="w-[105px] pl-px pt-px">
          <Small icon="extruded" text="Extruded Cut" on />
          <Small icon="hole" text="Simple Hole" on />
          <Small icon="vent" text="Vent" on />
        </Col>
        <Col cls="w-[98px] pt-px">
          <Small icon="normal" text="Normal Cut" />
        </Col>
        <Sep />
        <Col cls="w-[76px] pl-px pt-px">
          <Small icon="unfold" text="Unfold" />
          <Small icon="fold" text="Fold" />
          <Small icon="flatten" text="Flatten" on active />
        </Col>
        <Big icon="nobends" lines={["No", "Bends"]} cls="w-[42px]" />
        <Sep />
        <Big icon="rip" lines={["Rip"]} cls="w-8" on />
        <Big icon="insert" lines={["Insert", "Bends"]} cls="w-[42px]" />
        <button aria-label="Collapse ribbon" className="mt-auto mr-2 mb-1.5 ml-auto">
          <Ico cls="h-3 w-3" box={12}><path d="M1 9l5-5 5 5" stroke="#222" strokeWidth="2.200" /></Ico>
        </button>
      </section>

      <main className="flex min-h-0 flex-1 flex-col bg-[radial-gradient(ellipse_50%_60%_at_22%_5%,#fffffe_30%,#ffffff00_100%),radial-gradient(ellipse_60%_38%_at_45%_95%,#fffffc_60%,#ffffff00_100%),linear-gradient(180deg,#e9ebf1_0%,#dbdfe8_30%,#dcdfe8_50%,#f6f7f8_68%,#f9f9fa_100%)]">
        <div className="flex h-[22px] shrink-0 items-stretch">
          <div role="tablist" aria-label="Command tabs" className="flex">
            {ribbonTabs.map(([t, w]) => (
              <button
                key={t}
                role="tab"
                aria-selected={t === "Sheet Metal"}
                className={`${w} shrink-0 border-r border-b border-[#858585] text-center whitespace-nowrap ${
                  t === "Sheet Metal" ? "bg-[#f7f7f5] font-bold" : "bg-[#d5d5d3]"
                }`}
              >
                {t}
              </button>
            ))}
          </div>
          <div className="mt-1.5 ml-auto flex gap-1.5 pr-[9px] text-[#9a9a9a]">
            {[
              ["Collapse left pane", "M4 3h12v14H4zM10 7v6l-3-3zM13 6v1M13 10v1M13 14v1"],
              ["Expand right pane", "M4 3h12v14H4zM10 7v6l3-3zM7 6v1M7 10v1M7 14v1"],
              ["Minimize document", "M5 15h10"],
              ["Restore document", "M3 9h10v7H3zM8 9V4h9v7h-4"],
              ["Close document", "M5 5l10 10M15 5 5 15"],
            ].map(([l, d]) => (
              <button key={l} aria-label={l} className="h-5 w-5">
                <Ico><path d={d} stroke="currentColor" strokeWidth="1.300" /></Ico>
              </button>
            ))}
          </div>
        </div>

        <div className="flex min-h-0 flex-1">
          <aside className="flex w-[246px] shrink-0 flex-col border-r border-l border-r-[#7d7d7d] border-l-[#c9c9c9] bg-[#f7f7f6]">
            <div className="mt-1 mr-1 flex h-4 shrink-0 items-center justify-center border-t border-b border-[#cfcfcf]">
              <span className="h-1.5 w-1.5 rounded-full border border-[#888] bg-[#ccc]" />
            </div>
            <div className="mt-1 mr-0.5 flex h-[26px] shrink-0 border-t border-[#858585] bg-[#d5d5d3]">
              {panelTabs.map((t, i) => (
                <button
                  key={t.label}
                  aria-label={t.label}
                  className={`flex shrink-0 items-center justify-center border-r border-[#858585] ${i === 0 ? "w-[41px] bg-[#f7f7f6] pl-1" : "w-10 border-b"}`}
                >
                  <Ico cls="h-[19px] w-[19px]">{t.icon}</Ico>
                </button>
              ))}
              <div className="flex flex-1 items-end border-b border-[#858585] pl-[5px]">
                {["M4 0v6L0 3z", "M0 0v6l4-3z"].map((d, i) => (
                  <button key={d} aria-label={i ? "Next tabs" : "Previous tabs"} className="flex h-[19px] w-[18px] items-center justify-center border border-[#a9a9a9] bg-[#fafafa]">
                    <svg viewBox="0 0 4 6" className="h-1.5 w-1" aria-hidden="true"><path d={d} fill="#111" /></svg>
                  </button>
                ))}
              </div>
            </div>
            <label className="mr-[5px] ml-1 flex h-[25px] shrink-0 items-center border border-[#c8c8c8] pl-px">
              <Ico>
                <path d="M1 3h18l-7 8v8l-4-3v-5z" fill="#f4f4f4" stroke="#444" strokeWidth="1.200" />
                <path d="M1 3h18l-3 3.500H4z" fill={B} stroke="#1a4c68" />
              </Ico>
              <input aria-label="Filter tree" className="w-0 flex-1 bg-transparent outline-none" />
            </label>
            <ul className="min-h-0 flex-1 overflow-hidden pt-0.5">
              <li className="flex h-[22px] items-center gap-1 pl-[3px] whitespace-nowrap">
                <Ico cls="h-[19px] w-[19px]">{partIcon}</Ico>
                <span>sheetmetal (b) &lt;&lt;Default&gt;_Display State</span>
              </li>
              {tree.map((t) => (
                <li key={t.text} className="flex h-[22px] items-center whitespace-nowrap">
                  <span className="w-[26px] pb-0.5 pl-[9px]">
                    {t.arrow && (
                      <svg viewBox="0 0 4 8" className="h-2 w-1" aria-hidden="true"><path d="M0 0l4 4-4 4z" fill="#666" /></svg>
                    )}
                  </span>
                  <Ico cls="h-[19px] w-[19px]">{t.icon}</Ico>
                  <span className="pl-1">{t.text}</span>
                </li>
              ))}
              <li className="mr-0.5 h-[3px] bg-[#2a8ebd]" aria-hidden="true" />
            </ul>
            <div className="mb-1.5 flex h-[15px] shrink-0 items-center bg-[#f1f1f1]">
              <button aria-label="Scroll left" className="flex w-[17px] justify-center">
                <Ico cls="h-2.5 w-2.5" box={10}><path d="M7 1 3 5l4 4" stroke="#444" strokeWidth="1.600" /></Ico>
              </button>
              <span className="h-full w-[195px] bg-[#cbcbcb]" />
              <button aria-label="Scroll right" className="mr-1 ml-auto flex w-[10px] justify-center">
                <Ico cls="h-2.5 w-2.5" box={10}><path d="M3 1l4 4-4 4" stroke="#444" strokeWidth="1.600" /></Ico>
              </button>
            </div>
          </aside>

          <section aria-label="Graphics area" className="relative flex min-w-0 flex-1 items-start justify-between">
            <Model />
            <button aria-label="Toggle panel" className="absolute top-[247px] -left-px flex h-[39px] w-[9px] items-center justify-center border border-l-0 border-[#7d7d7d] bg-[#f7f7f6]">
              <span className="h-1.5 w-1.5 rounded-full border border-[#888] bg-[#ccc]" />
            </button>
            <nav aria-label="View tools" className="relative ml-auto flex items-center pt-[3px] opacity-90">
              {hud.map((h) => (
                <div key={h.label} className="flex items-center">
                  <button aria-label={h.label} className="flex w-[26px] justify-center"><Ico>{h.icon}</Ico></button>
                  {h.drop && <Drop label={`${h.label} options`} cls="w-3.5" color="#888" />}
                </div>
              ))}
            </nav>
            <nav aria-label="Task pane" className="relative mt-7 mr-px ml-[358px] flex w-[25px] shrink-0 flex-col border border-[#8c8c8c]">
              {pane.map((p, i) => (
                <button key={p.label} aria-label={p.label} className={`flex h-6 items-center justify-center border-b border-[#a5a5a5] ${i === 0 ? "bg-[#f7f7f5]" : "bg-[#d8d8d6]"}`}>
                  <Ico>{p.icon}</Ico>
                </button>
              ))}
            </nav>
            <div className="pointer-events-none absolute right-14 bottom-0 text-[#adafb2]">
              <p className="text-[19px] leading-[25px]">Activate Windows</p>
              <p className="text-[14px] leading-[19px]">Go to Settings to activate Windows.</p>
            </div>
          </section>
        </div>
      </main>

      <div className="flex h-4 shrink-0 border-t border-b border-[#7d7d7d]">
        <div className="ml-0.5 flex w-[65px] border-t border-black bg-[#b4b4b2]">
          {["M2 1v8M8 1v8L3 5z", "M7 1v8L3 5z", "M3 1v8l4-4z", "M8 1v8M2 1v8l5-4z"].map((d, i) => (
            <button key={d} aria-label={["First tab", "Previous tab", "Next tab", "Last tab"][i]} className="flex flex-1 items-center justify-center border-r border-[#8f8f8f]">
              <Ico cls="h-2.5 w-2.5" box={10}><path d={d} stroke="#969696" fill="#969696" /></Ico>
            </button>
          ))}
        </div>
        <button className="w-[57px] border-r border-[#7d7d7d] bg-[#f7f7f5] leading-[13px] font-bold text-black">Model</button>
        <button className="w-[68px] border-r border-[#7d7d7d] bg-[#d5d5d3] leading-[13px]">3D Views</button>
        <button className="w-[108px] border-r border-[#7d7d7d] bg-[#d5d5d3] pr-2.5 leading-[13px]">Motion Study 1</button>
      </div>
      <div className="flex h-[18px] shrink-0 items-center pr-1 pl-px leading-[18px] text-black">
        <span>SOLIDWORKS Premium 2023 SP0.1</span>
        <button className="ml-auto">MMGS</button>
        <svg viewBox="0 0 6 4" className="mr-[26px] ml-[18px] h-1 w-1.5" aria-hidden="true"><path d="M0 4h6L3 0z" fill="#222" /></svg>
        <Ico cls="h-4 w-4"><path d="M1 5l5-4 12 6 1 6-7 6L2 12zM2 12l5-4 12 5M6 1l1 7" stroke={K} strokeWidth="1.300" fill="#eee" /><circle cx="8" cy="6" r="2" stroke={K} /></Ico>
      </div>

      <footer className="flex h-10 shrink-0 items-center bg-[#101010] text-white">
        <button aria-label="Start" className="flex w-12 shrink-0 justify-center">
          <Ico cls="h-4 w-4" box={16}><path d="M0 2.200 7 1.200v6.300H0zM8 1l8-1v7.500H8zM0 8.500h7v6.300l-7-1zM8 8.500h8V16l-8-1.100z" fill="#fff" /></Ico>
        </button>
        <label className="flex h-10 w-[287px] shrink-0 items-center gap-3 border border-[#595959] bg-[#3d3d3d] pl-[11px]">
          <Ico cls="h-[17px] w-[17px]"><circle cx="12.500" cy="7.500" r="6" stroke="#eee" strokeWidth="1.600" /><path d="M8 12 1 19" stroke="#eee" strokeWidth="1.600" /></Ico>
          <input aria-label="Type here to search" placeholder="Type here to search" className="w-0 flex-1 bg-transparent text-[14px] outline-none placeholder:text-[#cfcfcf]" />
        </label>
        <button aria-label="Task View" className="flex w-[49px] shrink-0 justify-center">
          <Ico cls="h-[18px] w-[18px]"><path d="M2 2v3h12V2M2 18v-3h12v3M2 8h12v4H2zM18 2v3M18 10v8" stroke="#fff" strokeWidth="1.500" /><path d="M16.500 6h3v3h-3z" fill="#fff" /></Ico>
        </button>
        <div className="flex h-full pl-[3px]">
          {apps.map((a) => (
            <button key={a.label} aria-label={a.label} className={`mr-px flex h-full w-12 shrink-0 flex-col items-center ${a.active ? "bg-[#343434]" : ""}`}>
              <span className="relative mt-2 flex h-[30px] w-full justify-center">
                <Ico box={24} cls="h-6 w-6">{a.icon}</Ico>
                {a.badge && (
                  <span className="absolute top-3 left-[26px] rounded-full border border-[#888] bg-[#333]/80 px-0.5 text-[11px] leading-[14px] font-semibold text-white">{a.badge}</span>
                )}
                {a.active && <span className="absolute top-[13px] bg-black px-0.5 text-[9px] leading-[10px] font-bold text-white">2023</span>}
              </span>
              {a.open && <span className={`h-0.5 bg-[#f3b68f] ${a.active ? "w-full" : "w-10"}`} />}
            </button>
          ))}
        </div>
        <div className="ml-auto flex h-full shrink-0 items-center">
          <Ico box={26} cls="h-[26px] w-[26px]">
            <path d="M12 1c-1 5 2 9 7 9-2 6-12 7-16 1 6 1 9-3 9-10z" fill="#f6a623" />
            <path d="M6 23a5 5 0 0 1 0-10c2-6 11-5 12 0 7-1 9 9 2 10z" fill="#a9c8f5" />
            <path d="M6 23a5 5 0 0 1-4-6c6 3 16 3 23 1 0 3-2 5-5 5z" fill="#86aeea" />
          </Ico>
          <span className="ml-1.5 w-[30px] text-[13px]">22°C</span>
          <span dir="rtl" className="ml-2 w-[46px] font-['DejaVu_Sans',sans-serif] text-[12px] whitespace-nowrap">غائم غالبًا</span>
          <div className="ml-[18px] flex items-center gap-1">
            {[
              ["Show hidden icons", "M4 13l6-6 6 6"],
              ["Meet now", "M4 6h9v9H4zM13 9l3-2v7l-3-2M6 3c2-1 4-1 6 0M6 18c2 1 4 1 6 0"],
              ["Network", "M4 17C4 9 9 4 16 4M7 17c0-6 4-10 9-10M10 17c0-4 3-7 6-7M13 17c0-2 1-4 3-4"],
              ["Battery", "M7 7h11v7H7zM8 9h9M8 11h9M8 13h9M19 9v3M2 3v3h4V3M4 6v7h3"],
              ["Volume", "M2 8h3l4-4v12l-4-4H2zM11 7c2 2 2 4 0 6M13 5c3 3 3 7 0 10M15 3c4 4 4 10 0 14"],
            ].map(([l, d]) => (
              <button key={l} aria-label={l}><Ico><path d={d} stroke="#fff" strokeWidth="1.200" /></Ico></button>
            ))}
          </div>
          <span className="w-[38px] text-center font-['DejaVu_Sans',sans-serif] text-[12px]">ع</span>
          <div className="w-[64px] text-center leading-[18px]">
            <p>9:12 PM</p>
            <p>10/13/2025</p>
          </div>
          <button aria-label="Notifications" className="relative ml-3 h-5 w-9">
            <Ico><path d="M1 2h17v13h-9l-3 3v-3H1z" fill="#fff" /><path d="M4 6h11M4 9h11M4 12h6" stroke="#111" strokeWidth="1.300" /></Ico>
            <span className="absolute top-2 left-2 rounded-full border border-[#888] bg-[#333] px-0.5 text-[11px] leading-4 font-semibold">14</span>
          </button>
          <span className="mr-1 h-full w-px bg-[#555]" />
        </div>
      </footer>

      <div className="pointer-events-none absolute right-0 bottom-0 left-0 flex flex-col items-center text-center">
        <p dir="rtl" className="font-['DejaVu_Sans',sans-serif] text-[54px] leading-[54px] font-bold text-[#d2d2d2]/70">نفذلي</p>
        <p className="font-['Inter',sans-serif] text-[26px] leading-8 font-semibold text-[#c4c4c4]/75">nafezly.com</p>
      </div>
    </div>
  );
}
